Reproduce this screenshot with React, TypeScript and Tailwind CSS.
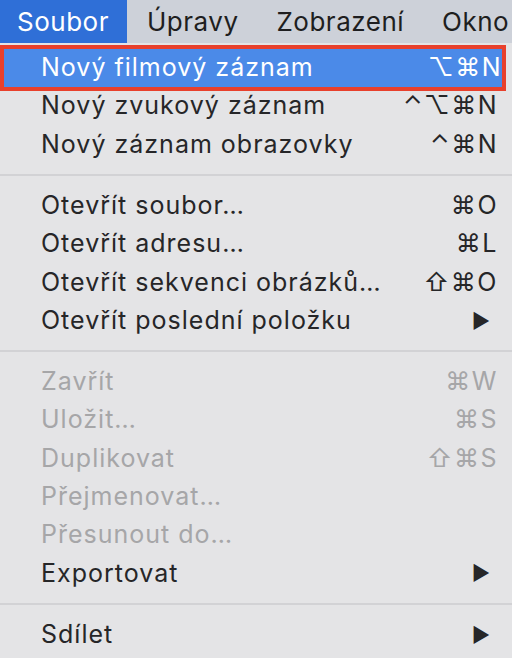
import React from "react";

type Item = {
  label: string;
  shortcut?: string;
  submenu?: boolean;
  disabled?: boolean;
};

const groups: Item[][] = [
  [
    { label: "Nový zvukový záznam", shortcut: "⌃⌥⌘N" },
    { label: "Nový záznam obrazovky", shortcut: "⌃⌘N" },
  ],
  [
    { label: "Otevřít soubor…", shortcut: "⌘O" },
    { label: "Otevřít adresu…", shortcut: "⌘L" },
    { label: "Otevřít sekvenci obrázků…", shortcut: "⇧⌘O" },
    { label: "Otevřít poslední položku", submenu: true },
  ],
  [
    { label: "Zavřít", shortcut: "⌘W", disabled: true },
    { label: "Uložit…", shortcut: "⌘S", disabled: true },
    { label: "Duplikovat", shortcut: "⇧⌘S", disabled: true },
    { label: "Přejmenovat…", disabled: true },
    { label: "Přesunout do…", disabled: true },
    { label: "Exportovat", submenu: true },
  ],
  [{ label: "Sdílet", submenu: true }],
];

const Row: React.FC<{ item: Item }> = ({ item }) => (
  <div
    className={`flex h-[38.3px] items-center justify-between pl-[41px] pr-[14px] ${
      item.disabled ? "text-[#a6a6a8]" : "text-[#262628]"
    }`}
  >
    <span>{item.label}</span>
    {item.shortcut && <span className="tracking-[1.5px]">{item.shortcut}</span>}
    {item.submenu && <span className="mr-[7px] text-[20px]">▶</span>}
  </div>
);

const Separator = () => (
  <div className="flex h-[23px] items-center">
    <div className="h-[2px] w-full bg-[#d2d2d5]" />
  </div>
);

export default function App() {
  return (
    <div className="h-[658px] w-[512px] overflow-hidden bg-[#e4e4e6] font-['Inter','Liberation_Sans',sans-serif] text-[25px] tracking-[1px]">
      <div className="flex h-[43px] items-center bg-[#cdd1d9] text-[26px] tracking-[0.5px] text-[#1e1e20]">
        <div className="flex h-full w-[127px] items-center bg-[#2f6fd7] pl-[17px] text-white">
          Soubor
        </div>
        <div className="ml-[20px]">Úpravy</div>
        <div className="ml-[38px]">Zobrazení</div>
        <div className="ml-[38px] whitespace-nowrap">Okno</div>
      </div>

      <div className="pt-[6px]">
        <div className="ml-[4px] mr-[10px] bg-[#4b8ae8] outline-4 outline-[#e8402c]">
          <div className="flex h-[38px] items-center justify-between pl-[37px] pr-0 text-white">
            <span>Nový filmový záznam</span>
            <span className="tracking-[1.5px]">⌥⌘N</span>
          </div>
        </div>
        {groups.map((g, i) => (
          <div key={i}>
            {i > 0 && <Separator />}
            {g.map((item) => (
              <Row key={item.label} item={item} />
            ))}
          </div>
        ))}
      </div>
    </div>
  );
}
